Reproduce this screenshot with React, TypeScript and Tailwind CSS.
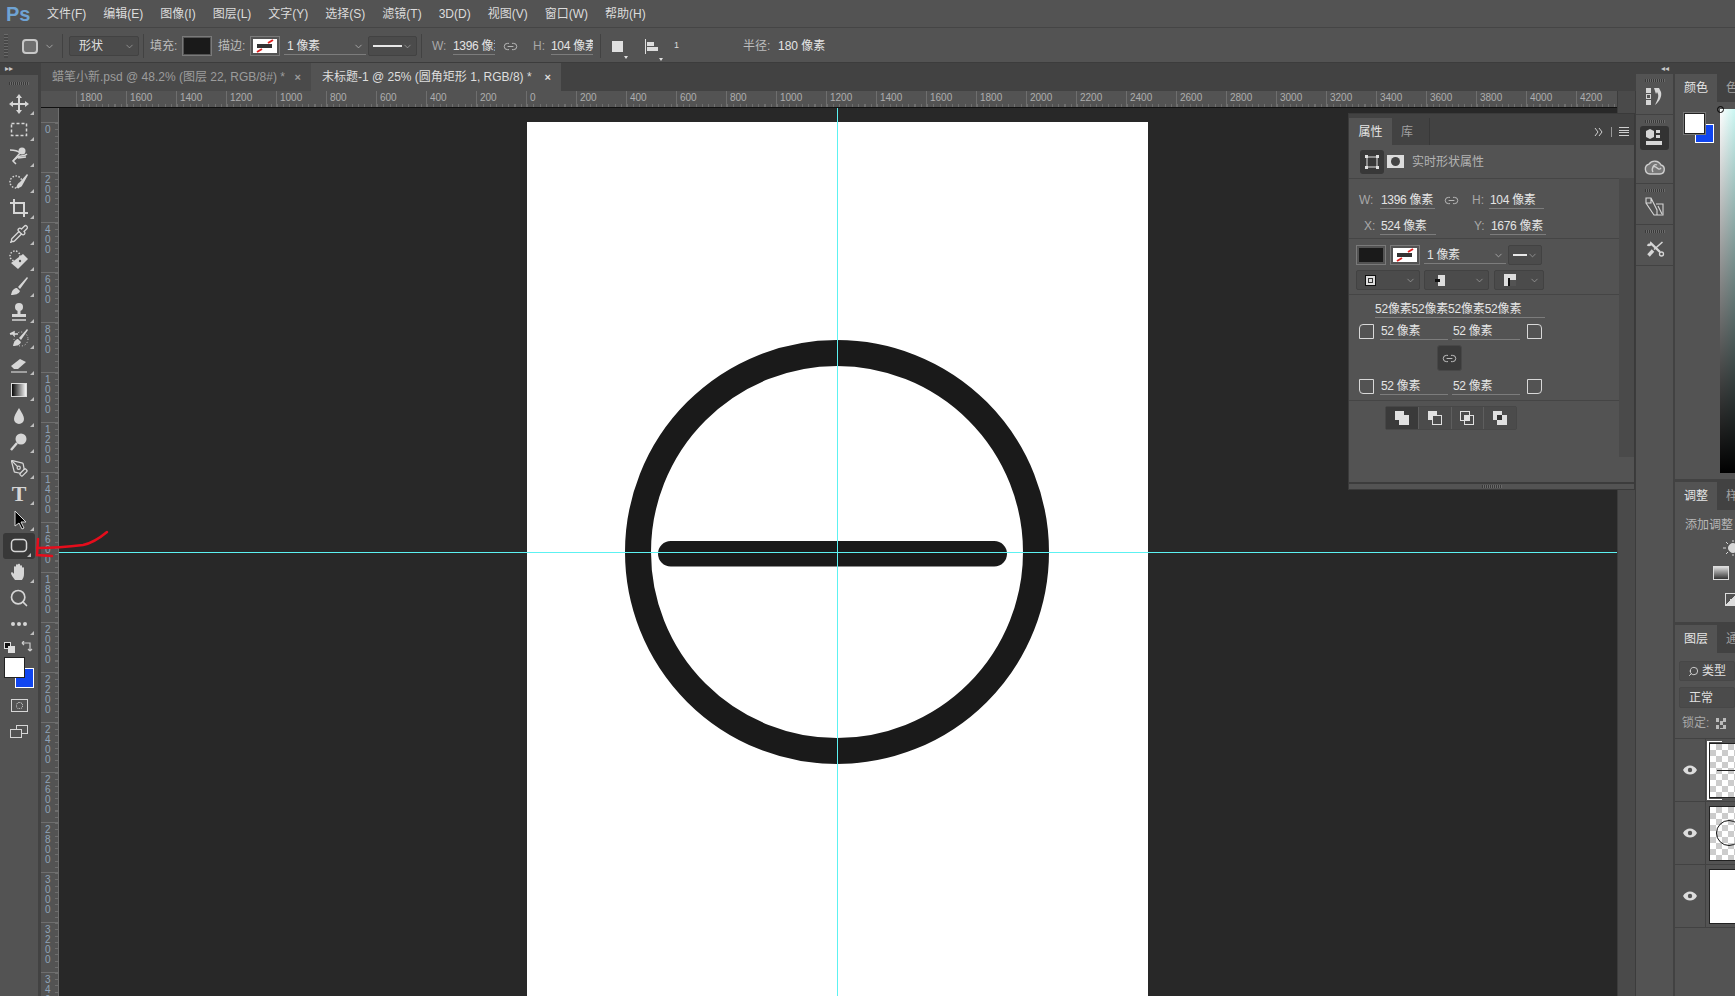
import type { ReactNode } from 'react';
import { ChevronDown, Pipette, PenTool, Search, Link2 } from 'lucide-react';

const font = { fontFamily: '"Liberation Sans", "Noto Sans CJK SC", sans-serif' };

const menus = ['文件(F)', '编辑(E)', '图像(I)', '图层(L)', '文字(Y)', '选择(S)', '滤镜(T)', '3D(D)', '视图(V)', '窗口(W)', '帮助(H)'];

const hLabels = Array.from({ length: 31 }, (_, i) => Math.abs(1800 - i * 200));
const vLabels = Array.from({ length: 18 }, (_, i) => i * 200);

function Svg({ children, size = 20 }: { children: ReactNode; size?: number }) {
  return (
    <svg width={size} height={size} viewBox="0 0 20 20" fill="none" stroke="#d6d6d6" strokeWidth={1.5}>
      {children}
    </svg>
  );
}

const toolIcons: ReactNode[] = [
  // move
  <Svg key="move"><path d="M10 2v16M2 10h16" strokeWidth={2} /><path d="M10 0l3 4H7zM10 20l3-4H7zM0 10l4-3v6zM20 10l-4-3v6z" fill="#d6d6d6" stroke="none" /></Svg>,
  // marquee
  <Svg key="marquee"><rect x="2.5" y="3.5" width="15" height="12" strokeDasharray="3 2" /></Svg>,
  // lasso
  <Svg key="lasso"><path d="M1 4c5 0 8 1 10 3l-7 8 3 3" /><path d="M4 15c3-3 6-5 8-5 3 0 5-1 6-2" /><circle cx="13" cy="5" r="3.5" fill="#d6d6d6" stroke="none" /><path d="M9 12l8-1" /></Svg>,
  // quick selection
  <Svg key="quick"><circle cx="7" cy="10" r="6" strokeDasharray="1.5 1.5" /><path d="M18 2l-7 8c-2 1-3 3-4 6 3 0 6-1 7-4l5-9z" fill="#d6d6d6" stroke="none" /></Svg>,
  // crop
  <Svg key="crop"><path d="M5 1v14h14M1 5h14v14" strokeWidth={2} /></Svg>,
  // eyedropper
  <Pipette key="pipette" size={20} color="#d6d6d6" strokeWidth={1.6} />,
  // healing
  <Svg key="heal"><circle cx="6" cy="6" r="5" strokeDasharray="1.5 1.5" /><path d="M14 4l5 5-10 10-7-6z" fill="#d6d6d6" stroke="none" /><circle cx="11" cy="11" r="1.2" fill="#535353" stroke="none" /></Svg>,
  // brush
  <Svg key="brush"><path d="M18 1L9 11l2 2 8-11zM8 12c-3 0-5 2-6 7 4 0 8-1 9-4z" fill="#d6d6d6" stroke="none" /></Svg>,
  // stamp
  <Svg key="stamp"><circle cx="10" cy="5" r="4" fill="#d6d6d6" stroke="none" /><path d="M8.5 8h3v4h-3zM3 12h14v3H3z" fill="#d6d6d6" stroke="none" /><path d="M3 18h14" /></Svg>,
  // history brush
  <Svg key="history"><path d="M18 1l-8 9 2 2 7-10zM9 11c-2 0-4 2-5 7 4 0 7-1 8-4z" fill="#d6d6d6" stroke="none" /><path d="M1 6h8M1 6l4-2v4" /><circle cx="12" cy="11" r="7" strokeDasharray="1 2" strokeWidth={1} /></Svg>,
  // eraser
  <Svg key="eraser"><path d="M2 12l9-7 6 3-8 7H5z" fill="#d6d6d6" stroke="none" /><path d="M2 18h16" strokeWidth={1.2} /></Svg>,
  // gradient
  <svg key="grad" width="16" height="14" viewBox="0 0 16 14">
    <defs>
      <linearGradient id="tg">
        <stop offset="0" stopColor="#000" />
        <stop offset="1" stopColor="#fff" />
      </linearGradient>
    </defs>
    <rect x="0.5" y="0.5" width="15" height="13" fill="url(#tg)" stroke="#ddd" />
  </svg>,
  // blur
  <Svg key="drop"><path d="M10 2c3 5 5 8 5 11a5 5 0 0 1-10 0c0-3 2-6 5-11z" fill="#d6d6d6" stroke="none" /></Svg>,
  // dodge
  <Svg key="dodge"><circle cx="12" cy="7" r="5.5" fill="#d6d6d6" stroke="none" /><path d="M8 11l-6 7" strokeWidth={2.4} /></Svg>,
  // pen
  <PenTool key="pen" size={19} color="#d6d6d6" strokeWidth={1.6} />,
  // type
  <span key="t" className="text-[22px] leading-none font-bold text-[#d6d6d6]" style={{ fontFamily: '"Liberation Serif", serif' }}>T</span>,
  // path selection
  <Svg key="arrow"><path d="M6 1v15l4-3 3 6 2-1-3-6h5z" fill="#000" stroke="#d6d6d6" strokeWidth={1} /></Svg>,
  // rounded rect
  <Svg key="rrect"><rect x="2.5" y="3.5" width="15" height="12" rx="3.5" /></Svg>,
  // hand
  <Svg key="hand"><path d="M5 18c-2-3-4-5-4-7 0-1 2-1 3 1V5c0-1 2-1 2 0V3c0-1 2-1 2 0v-.5c0-1 2-1 2 0V4c0-1 2-1 2 0v2c0-1 2-1 2 0v6c0 3-1 4-2 6z" fill="#d6d6d6" stroke="none" transform="translate(1 0)" /></Svg>,
  // zoom
  <Search key="zoom" size={20} color="#d6d6d6" strokeWidth={2} />,
  // more
  <Svg key="more"><circle cx="4" cy="10" r="2" fill="#d6d6d6" stroke="none" /><circle cx="10" cy="10" r="2" fill="#d6d6d6" stroke="none" /><circle cx="16" cy="10" r="2" fill="#d6d6d6" stroke="none" /></Svg>,
];

function Grip() {
  return <div className="h-[3px] w-[20px] shrink-0 bg-[repeating-linear-gradient(90deg,#3a3a3a_0_1px,#6a6a6a_1px_2px)]" />;
}

function Dropdown({ className, children }: { className: string; children?: ReactNode }) {
  return (
    <div className={`flex h-[20px] items-center justify-between rounded-[2px] border border-[#424242] bg-[#4b4b4b] pr-[3px] ${className}`}>
      {children}
      <ChevronDown size={11} color="#a8a8a8" strokeWidth={1.5} />
    </div>
  );
}

function StrokeSwatch({ className }: { className: string }) {
  return (
    <div className={`flex h-[20px] w-[30px] items-center justify-center border border-[#7a7a7a] ${className}`}>
      <svg width="24" height="14" viewBox="0 0 24 14">
        <rect width="24" height="14" fill="#fff" />
        <rect x="4" y="5" width="15" height="4" fill="#333" />
        <path d="M15 4l5-3M4 13l5-3" stroke="#e02020" strokeWidth="2" />
      </svg>
    </div>
  );
}

function Field({ className, children }: { className: string; children: ReactNode }) {
  return <div className={`h-[17px] overflow-hidden whitespace-nowrap border-b border-[#7c7c7c] text-[12px] leading-[17px] tracking-[-0.3px] text-[#e4e4e4] ${className}`}>{children}</div>;
}

function Corner({ d }: { d: string }) {
  return (
    <svg width="15" height="15" viewBox="0 0 15 15" fill="none" stroke="#d8d8d8" strokeWidth="1">
      <path d={d} />
    </svg>
  );
}

function TabHead({ label, other }: { label: string; other: string }) {
  return (
    <div className="flex h-[28px] shrink-0 bg-[#424242]">
      <div className="flex w-[42px] shrink-0 items-center justify-center bg-[#535353] text-[12px] text-[#e6e6e6]">{label}</div>
      <div className="flex w-[40px] shrink-0 items-center pl-[9px] text-[12px] text-[#a0a0a0]">{other}</div>
    </div>
  );
}

function LayerRow({ children }: { children: ReactNode }) {
  return (
    <div className="flex h-[63px] shrink-0 border-b border-[#424242]">
      <div className="flex w-[31px] shrink-0 items-center justify-center border-r border-[#424242]">
        <svg width="14" height="10" viewBox="0 0 14 10">
          <path d="M0 5c3-6 11-6 14 0-3 6-11 6-14 0z" fill="#ddd" />
          <circle cx="7" cy="5" r="2.2" fill="#535353" />
        </svg>
      </div>
      <div className="ml-[3px] mt-[4px] h-[55px] flex-1">{children}</div>
    </div>
  );
}

export default function App() {
  return (
    <div className="relative flex h-[996px] w-full flex-col overflow-hidden bg-[#535353] select-none" style={font}>
      {/* Menu bar */}
      <div className="flex h-[28px] shrink-0 items-center border-b border-[#454545]">
        <span className="ml-[6px] w-[41px] text-[20px] font-bold leading-none text-[#6fa3d4]">Ps</span>
        <div className="flex gap-[17px] text-[12px] text-[#dcdcdc]">
          {menus.map((m) => (
            <span key={m}>{m}</span>
          ))}
        </div>
      </div>

      {/* Options bar */}
      <div className="flex h-[35px] shrink-0 items-center border-b border-[#3c3c3c] pt-[2px] text-[12px] text-[#bcbcbc]">
        <div className="ml-[4px] h-[24px] w-[4px] bg-[repeating-linear-gradient(180deg,#6a6a6a_0_1px,#474747_1px_3px)]" />
        <div className="ml-[14px] h-[15px] w-[16px] rounded-[4px] border-2 border-[#c8c8c8] bg-[#6f6f6f]" />
        <ChevronDown className="ml-[6px]" size={11} color="#a8a8a8" />
        <div className="ml-[7px] h-[24px] w-px bg-[#424242]" />
        <Dropdown className="ml-[6px] w-[70px] pl-[9px]"><span className="text-[#e0e0e0]">形状</span></Dropdown>
        <div className="ml-[4px] h-[24px] w-px bg-[#424242]" />
        <span className="ml-[6px] w-[32px]">填充:</span>
        <div className="flex h-[20px] w-[30px] items-center justify-center border border-[#7a7a7a]"><div className="h-[16px] w-[26px] bg-[#1a1a1a]" /></div>
        <span className="ml-[6px] w-[32px]">描边:</span>
        <StrokeSwatch className="" />
        <Field className="ml-[4px] w-[82px] pl-[3px]"><span>1 像素</span></Field>
        <ChevronDown className="-ml-[13px]" size={11} color="#a8a8a8" />
        <Dropdown className="ml-[4px] w-[49px] pl-[4px]"><div className="h-[2px] w-[29px] bg-[#e8e8e8]" /></Dropdown>
        <div className="ml-[4px] h-[24px] w-px bg-[#424242]" />
        <span className="ml-[10px] w-[21px] text-[#a8a8a8]">W:</span>
        <Field className="w-[42px]">1396 像素</Field>
        <Link2 className="ml-[8px]" size={15} color="#bcbcbc" strokeWidth={1.5} />
        <span className="ml-[15px] w-[18px] text-[#a8a8a8]">H:</span>
        <Field className="w-[42px]">104 像素</Field>
        <div className="ml-[7px] h-[24px] w-px bg-[#424242]" />
        <div className="relative ml-[11px] h-[11px] w-[11px] bg-[#e0e0e0]">
          <div className="absolute -bottom-[7px] left-[12px] h-0 w-0 border-x-[2px] border-t-[3px] border-x-transparent border-t-[#e0e0e0]" />
        </div>
        <div className="relative ml-[22px] flex h-[15px] w-[14px] flex-col justify-center gap-[1px] border-l border-[#dcdcdc] pl-[1px]">
          <div className="h-[4px] w-[7px] bg-[#dcdcdc]" />
          <div className="h-[4px] w-[11px] bg-[#dcdcdc]" />
          <div className="absolute -bottom-[7px] left-[13px] h-0 w-0 border-x-[2px] border-t-[3px] border-x-transparent border-t-[#e0e0e0]" />
        </div>
        <span className="ml-[15px] text-[9px] text-[#dcdcdc]">1</span>
        <span className="ml-[64px] w-[35px]">半径:</span>
        <span className="text-[#e4e4e4]">180 像素</span>
      </div>

      {/* Workspace */}
      <div className="flex min-h-0 flex-1">
        {/* Tools */}
        <div className="flex w-[41px] shrink-0 flex-col border-r-[3px] border-[#424242]">
          <div className="flex h-[12px] shrink-0 items-center bg-[#424242] pl-[5px] text-[8px] leading-none text-[#c8c8c8]">▸▸</div>
          <div className="flex h-[16px] shrink-0 items-center justify-center"><Grip /></div>
          {toolIcons.map((icon, i) => (
            <div key={i} className={`relative flex h-[26px] shrink-0 items-center justify-center ${i === 17 ? 'mx-[3px] rounded-[3px] bg-[#383838]' : ''}`}>
              {icon}
              {i !== 19 && <div className="absolute bottom-[2px] right-[4px] h-0 w-0 border-b-[4px] border-l-[4px] border-b-[#bdbdbd] border-l-transparent" />}
            </div>
          ))}
          <div className="relative h-[24px] shrink-0">
            <div className="absolute left-[4px] top-[5px] h-[7px] w-[7px] border border-[#ddd] bg-[#111]" />
            <div className="absolute left-[8px] top-[9px] h-[7px] w-[7px] bg-[#ddd]" />
            <svg className="absolute left-[21px] top-[4px]" width="12" height="12" viewBox="0 0 12 12" fill="none" stroke="#ccc" strokeWidth="1.2">
              <path d="M1 2h8v8M1 2l2-2M1 2l2 2M9 10l-2-2M9 10l2-2" />
            </svg>
          </div>
          <div className="relative h-[32px] shrink-0">
            <div className="absolute left-[15px] top-[7px] h-[20px] w-[19px] border border-white bg-[#1045f0]" />
            <div className="absolute left-[4px] top-[-4px] h-[21px] w-[21px] border border-[#222] bg-white" />
          </div>
          <div className="mt-[3px] flex h-[18px] shrink-0 items-center justify-center">
            <div className="flex h-[13px] w-[17px] items-center justify-center border border-[#d6d6d6]"><div className="h-[7px] w-[7px] rounded-full border border-dotted border-[#d6d6d6]" /></div>
          </div>
          <div className="relative mt-[9px] flex h-[18px] shrink-0 items-center justify-center">
            <svg width="18" height="14" viewBox="0 0 18 14" fill="#535353" stroke="#d6d6d6">
              <rect x="6.5" y="0.5" width="11" height="8" />
              <rect x="0.5" y="4.5" width="11" height="8" />
            </svg>
          </div>
        </div>

        {/* Documents */}
        <div className="flex min-w-0 flex-1 flex-col">
          <div className="flex h-[28px] shrink-0 bg-[#424242] text-[12px]">
            <div className="flex w-[270px] items-center justify-between bg-[#4a4a4a] pl-[11px] pr-[10px] text-[#9c9c9c]">
              <span>蜡笔小新.psd @ 48.2% (图层 22, RGB/8#) *</span>
              <span className="text-[11px] font-bold">×</span>
            </div>
            <div className="flex w-[250px] items-center justify-between bg-[#535353] pl-[11px] pr-[10px] text-[#dedede]">
              <span>未标题-1 @ 25% (圆角矩形 1, RGB/8) *</span>
              <span className="text-[11px] font-bold">×</span>
            </div>
          </div>

          <div className="flex min-h-0 flex-1">
            <div className="flex min-w-0 flex-1 flex-col">
              {/* Horizontal ruler */}
              <div className="flex h-[17px] shrink-0 overflow-hidden border-b border-[#111] text-[10px] leading-[13px] text-[#aeaeae]">
                <div className="w-[36px] shrink-0 border-r border-[#6e6e6e]" />
                {hLabels.map((v, i) => (
                  <div key={i} className="relative w-[50px] shrink-0 border-r border-[#6e6e6e] pl-[3px] bg-[repeating-linear-gradient(90deg,#6e6e6e_0_1px,transparent_1px_6.25px)] bg-[length:100%_3px] bg-bottom bg-no-repeat">
                    {v}
                  </div>
                ))}
              </div>

              <div className="flex min-h-0 flex-1">
                {/* Vertical ruler */}
                <div className="flex w-[18px] shrink-0 flex-col overflow-hidden border-r border-[#6e6e6e] text-[10px] leading-[10px] text-[#8fa3b8]">
                  <div className="h-[14px] shrink-0" />
                  {vLabels.map((v) => (
                    <div key={v} className="flex h-[50px] shrink-0 flex-col border-t border-[#6e6e6e] bg-[repeating-linear-gradient(180deg,#6e6e6e_0_1px,transparent_1px_6.25px)] bg-[length:3px_100%] bg-right bg-no-repeat pl-[4px] pt-[2px]">
                      {String(v).split('').map((c, i) => (
                        <span key={i}>{c}</span>
                      ))}
                    </div>
                  ))}
                </div>

                {/* Canvas */}
                <div className="relative min-w-0 flex-1 overflow-hidden bg-[#282828]">
                  <div className="absolute bottom-0 left-[468px] top-[14px] w-[621px] bg-white">
                    <svg className="absolute left-[98px] top-[218px]" width="424" height="424" viewBox="0 0 424 424">
                      <circle cx="212" cy="212" r="199" fill="none" stroke="#1a1a1a" strokeWidth="26" />
                      <rect x="33" y="201" width="349" height="25.5" rx="12.75" fill="#1a1a1a" />
                    </svg>
                  </div>
                  <div className="absolute bottom-0 left-[778px] top-0 w-px bg-[#5cf2f2]" />
                  <div className="absolute left-0 right-0 top-[444px] h-px bg-[#5cf2f2]" />
                </div>
              </div>
            </div>

            {/* Document scrollbar */}
            <div className="w-[19px] shrink-0 border-x border-[#3c3c3c] bg-[#4a4a4a]" />
          </div>
        </div>

        {/* Icon dock */}
        <div className="flex w-[39px] shrink-0 flex-col border-r-[2px] border-[#424242]">
          <div className="flex h-[11px] shrink-0 items-center justify-end bg-[#424242] pr-[4px] text-[8px] leading-none text-[#c8c8c8]">◂◂</div>
          <div className="flex h-[41px] shrink-0 flex-col items-center gap-[5px] border-b border-[#424242] pt-[5px]">
            <Grip />
            <svg width="18" height="20" viewBox="0 0 18 20" fill="#d6d6d6">
              <rect x="0" y="1" width="5" height="5" />
              <rect x="0.5" y="7.5" width="4" height="4" fill="none" stroke="#d6d6d6" />
              <rect x="0" y="13" width="5" height="5" />
              <path d="M8 1h5l2 4c1 4-1 9-6 13 2-4 4-8 3-11l-1-2-1 2z" />
            </svg>
          </div>
          <div className="flex h-[69px] shrink-0 flex-col items-center gap-[3px] border-b border-[#424242] pt-[5px]">
            <Grip />
            <div className="flex h-[24px] w-[29px] shrink-0 items-center justify-center rounded-[3px] bg-[#333]">
              <svg width="20" height="18" viewBox="0 0 20 18" fill="#d6d6d6">
                <path d="M1 2l4-2 4 2v6l-4 2-4-2z" />
                <rect x="11" y="1" width="4" height="3" />
                <rect x="11" y="6" width="4" height="3" />
                <rect x="1" y="12" width="16" height="4" />
              </svg>
            </div>
            <svg className="mt-[6px] shrink-0" width="22" height="16" viewBox="0 0 22 16" fill="#777" stroke="#cfcfcf" strokeWidth="1.4">
              <path d="M6 15a5 5 0 0 1-1-9.8A7 7 0 0 1 17 6a4.6 4.6 0 0 1-1 9z" />
              <path d="M9 8c3-3 5 5 8 1M13 6c-3-2-6 4-4 7" fill="none" />
            </svg>
          </div>
          <div className="flex h-[41px] shrink-0 flex-col items-center gap-[5px] border-b border-[#424242] pt-[5px]">
            <Grip />
            <svg width="20" height="20" viewBox="0 0 20 20" fill="none" stroke="#d6d6d6" strokeWidth="1.1">
              <path d="M1 1h5l6 12v5H9L1 6zM1 6h5V1M11 7h7v11h-6" />
              <path d="M13 9l4 8" />
            </svg>
          </div>
          <div className="flex h-[41px] shrink-0 flex-col items-center gap-[7px] border-b border-[#424242] pt-[5px]">
            <Grip />
            <svg width="20" height="18" viewBox="0 0 20 18" fill="#d6d6d6" stroke="#d6d6d6" strokeWidth="2.4">
              <path d="M2.5 4.5c1.5 1 3 .5 3.5-1L15 12" fill="none" />
              <path d="M17.5 2L9 9.5" fill="none" strokeWidth="1.6" />
              <path d="M8 10.5l-4.5 5" fill="none" strokeWidth="3.4" />
              <circle cx="16.5" cy="14" r="2" fill="none" strokeWidth="1.3" />
            </svg>
          </div>
        </div>

        {/* Right panels, cut off by the window edge */}
        <div className="flex w-[60px] shrink-0 flex-col overflow-hidden">
          <div className="h-[11px] shrink-0 bg-[#424242]" />
          <div className="flex h-[408px] shrink-0 flex-col border-b-[3px] border-[#424242]">
            <TabHead label="颜色" other="色" />
            <div className="relative min-h-0 flex-1">
              <div className="absolute left-[20px] top-[22px] h-[19px] w-[19px] border border-white bg-[#1045f0]" />
              <div className="absolute left-[9px] top-[11px] h-[21px] w-[21px] border border-[#222] bg-white outline outline-[#777]" />
              <div className="absolute bottom-[6px] left-[45px] top-[7px] w-[20px] bg-[linear-gradient(180deg,transparent,#000),linear-gradient(90deg,#fff,#b8f4ee)]">
                <div className="absolute -left-[3px] -top-[3px] h-[7px] w-[7px] rounded-full border border-black" />
              </div>
            </div>
          </div>
          <div className="flex h-[143px] shrink-0 flex-col border-b-[3px] border-[#424242]">
            <TabHead label="调整" other="样" />
            <span className="ml-[10px] mt-[6px] whitespace-nowrap text-[12px] text-[#b8b8b8]">添加调整</span>
            <svg className="ml-[48px] mt-[6px] shrink-0" width="14" height="16" viewBox="0 0 14 16" fill="#d6d6d6" stroke="#d6d6d6">
              <circle cx="10" cy="8" r="4.5" />
              <path d="M0 8h3M10 0v2M10 14v2M3 2l2 2M3 14l2-2" fill="none" />
            </svg>
            <div className="ml-[38px] mt-[10px] h-[14px] w-[16px] shrink-0 border border-[#ddd] bg-[linear-gradient(180deg,#ddd,#333)]" />
            <div className="ml-[50px] mt-[13px] h-[13px] w-[11px] shrink-0 border border-[#ddd] bg-[linear-gradient(135deg,transparent_50%,#ddd_50%)]" />
          </div>
          <div className="flex min-h-0 flex-1 flex-col">
            <TabHead label="图层" other="通" />
            <div className="ml-[4px] mt-[8px] flex h-[20px] shrink-0 items-center whitespace-nowrap rounded-[2px] border border-[#474747] bg-[#4b4b4b] pl-[8px] text-[12px] text-[#e0e0e0]">
              <Search className="-scale-x-100" size={11} color="#d6d6d6" />
              <span className="ml-[3px]">类型</span>
            </div>
            <div className="ml-[4px] mt-[6px] flex h-[21px] shrink-0 items-center rounded-[2px] border border-[#474747] bg-[#4b4b4b] pl-[9px] text-[12px] text-[#e0e0e0]">正常</div>
            <div className="flex h-[31px] shrink-0 items-center whitespace-nowrap border-b border-[#424242] pl-[7px] text-[12px] text-[#a8a8a8]">
              <span>锁定:</span>
              <div className="ml-[7px] h-[11px] w-[11px] bg-[repeating-conic-gradient(#555_0_25%,#bbb_0_50%)] bg-[length:7px_7px]" />
            </div>
            <LayerRow>
              <div className="relative h-full w-[40px] border border-[#222] bg-[repeating-conic-gradient(#ccc_0_25%,#fff_0_50%)] bg-[length:12px_12px]">
                <div className="absolute left-[7px] top-[26px] h-px w-[32px] bg-[#222]" />
                <div className="absolute -left-[3px] -top-[3px] h-[59px] w-[15px] border-y border-l-2 border-white" />
              </div>
            </LayerRow>
            <LayerRow>
              <div className="relative h-full w-[40px] overflow-hidden border border-[#222] bg-[repeating-conic-gradient(#ccc_0_25%,#fff_0_50%)] bg-[length:12px_12px]">
                <div className="absolute left-[6px] top-[13px] h-[26px] w-[26px] rounded-full border border-[#111]" />
              </div>
            </LayerRow>
            <LayerRow>
              <div className="h-full w-[40px] border border-[#222] bg-white" />
            </LayerRow>
          </div>
        </div>
      </div>

      {/* Properties panel */}
      <div className="absolute left-[1348px] top-[113px] flex h-[377px] w-[287px] flex-col border border-[#3a3a3a] bg-[#535353] text-[12px] text-[#b4b4b4]">
        <div className="flex h-[31px] shrink-0 items-end bg-[#424242]">
          <div className="flex h-[27px] w-[43px] items-center justify-center bg-[#535353] text-[#e6e6e6]">属性</div>
          <div className="flex h-[27px] w-[38px] items-center border-r border-[#383838] pl-[9px] text-[#a0a0a0]">库</div>
          <div className="flex h-[27px] flex-1 items-center justify-end pr-[5px]">
            <svg width="9" height="8" viewBox="0 0 9 8" fill="none" stroke="#d0d0d0">
              <path d="M1 0l3 4-3 4M5 0l3 4-3 4" />
            </svg>
            <div className="ml-[8px] h-[10px] w-px bg-[#9a9a9a]" />
            <div className="ml-[7px] flex h-[9px] w-[10px] flex-col justify-between">
              <div className="h-px bg-[#d0d0d0]" />
              <div className="h-px bg-[#d0d0d0]" />
              <div className="h-px bg-[#d0d0d0]" />
              <div className="h-px bg-[#d0d0d0]" />
            </div>
          </div>
        </div>

        <div className="flex min-h-0 flex-1">
          <div className="flex min-w-0 flex-1 flex-col">
            <div className="flex h-[34px] shrink-0 items-center border-b border-[#454545] pl-[11px]">
              <div className="flex h-[24px] w-[24px] items-center justify-center rounded-[3px] bg-[#383838]">
                <svg width="14" height="14" viewBox="0 0 14 14" fill="#e0e0e0" stroke="#e0e0e0">
                  <rect x="2" y="2" width="10" height="10" fill="none" />
                  <rect x="0.5" y="0.5" width="2" height="2" />
                  <rect x="11.5" y="0.5" width="2" height="2" />
                  <rect x="0.5" y="11.5" width="2" height="2" />
                  <rect x="11.5" y="11.5" width="2" height="2" />
                </svg>
              </div>
              <div className="ml-[3px] flex h-[13px] w-[17px] items-center justify-center bg-[#dcdcdc]"><div className="h-[9px] w-[9px] rounded-full bg-[#444]" /></div>
              <span className="ml-[8px] pt-[1px]">实时形状属性</span>
            </div>

            <div className="flex h-[60px] shrink-0 flex-col gap-[8px] border-b border-[#454545] pt-[12px]">
              <div className="flex items-center">
                <span className="ml-[10px] w-[21px] text-[#a8a8a8]">W:</span>
                <Field className="w-[55px] pl-[1px]">1396 像素</Field>
                <Link2 className="ml-[9px]" size={15} color="#bcbcbc" strokeWidth={1.5} />
                <span className="ml-[13px] w-[17px] text-[#a8a8a8]">H:</span>
                <Field className="w-[55px] pl-[1px]">104 像素</Field>
              </div>
              <div className="flex items-center">
                <span className="ml-[15px] w-[16px] text-[#a8a8a8]">X:</span>
                <Field className="w-[56px] pl-[1px]">524 像素</Field>
                <span className="ml-[38px] w-[16px] text-[#a8a8a8]">Y:</span>
                <Field className="w-[56px] pl-[1px]">1676 像素</Field>
              </div>
            </div>

            <div className="flex h-[56px] shrink-0 flex-col gap-[5px] border-b border-[#454545] pl-[7px] pt-[6px]">
              <div className="flex items-center">
                <div className="flex h-[20px] w-[30px] items-center justify-center border border-[#7a7a7a]"><div className="h-[14px] w-[24px] bg-[#1a1a1a]" /></div>
                <StrokeSwatch className="ml-[4px]" />
                <Field className="ml-[4px] w-[82px] pl-[3px]">1 像素</Field>
                <ChevronDown className="-ml-[13px]" size={11} color="#a8a8a8" />
                <Dropdown className="ml-[4px] w-[34px] pl-[4px]"><div className="h-[2px] w-[14px] bg-[#e8e8e8]" /></Dropdown>
              </div>
              <div className="flex items-center gap-[4px]">
                <Dropdown className="w-[64px] pl-[8px]">
                  <div className="flex h-[11px] w-[11px] items-center justify-center border border-[#111] bg-[#ddd]"><div className="h-[5px] w-[5px] border border-[#333]" /></div>
                </Dropdown>
                <Dropdown className="w-[65px] pl-[10px]">
                  <div className="relative h-[11px] w-[10px]"><div className="absolute right-0 h-full w-[7px] bg-[#ddd]" /><div className="absolute left-0 top-[4px] h-[3px] w-[5px] bg-[#111]" /></div>
                </Dropdown>
                <Dropdown className="ml-[1px] w-[50px] pl-[9px]">
                  <div className="relative h-[12px] w-[12px] bg-[#ddd]"><div className="absolute right-0 top-[6px] h-[6px] w-[6px] bg-[#535353]" /><div className="absolute left-[4px] top-[4px] h-[8px] w-[2px] bg-[#111]" /></div>
                </Dropdown>
              </div>
            </div>

            <div className="flex h-[106px] shrink-0 flex-col border-b border-[#454545]">
              <div className="ml-[26px] mt-[6px] h-[17px] w-[170px] border-b border-[#7c7c7c] leading-[16px] tracking-[-0.2px] text-[#e4e4e4]">52像素52像素52像素52像素</div>
              <div className="mt-[5px] flex items-center">
                <div className="ml-[10px] w-[21px]"><Corner d="M0.5 14.5V4a3.5 3.5 0 0 1 3.5-3.5h10.5v14z" /></div>
                <Field className="w-[68px] pl-[1px]">52 像素</Field>
                <Field className="ml-[4px] w-[68px] pl-[1px]">52 像素</Field>
                <div className="ml-[7px]"><Corner d="M0.5 14.5V.5H11a3.5 3.5 0 0 1 3.5 3.5v10.5z" /></div>
              </div>
              <div className="ml-[88px] mt-[5px] flex h-[26px] w-[25px] items-center justify-center rounded-[3px] border border-[#474747] bg-[#3a3a3a]">
                <Link2 size={15} color="#c4c4c4" strokeWidth={1.5} />
              </div>
              <div className="mt-[7px] flex items-center">
                <div className="ml-[10px] w-[21px]"><Corner d="M.5.5v10.5a3.5 3.5 0 0 0 3.5 3.5h10.5V.5z" /></div>
                <Field className="w-[68px] pl-[1px]">52 像素</Field>
                <Field className="ml-[4px] w-[68px] pl-[1px]">52 像素</Field>
                <div className="ml-[7px]"><Corner d="M.5.5h14V11a3.5 3.5 0 0 1-3.5 3.5H.5z" /></div>
              </div>
            </div>

            <div className="ml-[36px] mt-[5px] flex h-[24px] w-[132px] rounded-[2px] border border-[#474747]">
              <div className="flex flex-1 items-center justify-center border-r border-[#5e5e5e] bg-[#3a3a3a]">
                <svg width="14" height="14" viewBox="0 0 14 14" fill="#e0e0e0"><rect width="9" height="9" /><rect x="4" y="4" width="10" height="10" /></svg>
              </div>
              <div className="flex flex-1 items-center justify-center border-r border-[#5e5e5e] bg-[#4b4b4b]">
                <svg width="14" height="14" viewBox="0 0 14 14"><rect width="9" height="9" fill="#e0e0e0" /><rect x="4.5" y="4.5" width="9" height="9" fill="#4b4b4b" stroke="#e0e0e0" /></svg>
              </div>
              <div className="flex flex-1 items-center justify-center border-r border-[#5e5e5e] bg-[#4b4b4b]">
                <svg width="14" height="14" viewBox="0 0 14 14" fill="none" stroke="#e0e0e0"><rect x=".5" y=".5" width="9" height="9" /><rect x="4.5" y="4.5" width="9" height="9" /><rect x="4" y="4" width="6" height="6" fill="#e0e0e0" stroke="none" /></svg>
              </div>
              <div className="flex flex-1 items-center justify-center bg-[#4b4b4b]">
                <svg width="14" height="14" viewBox="0 0 14 14" fill="#e0e0e0"><rect width="9" height="9" /><rect x="4" y="4" width="10" height="10" /><rect x="4" y="4" width="5" height="5" fill="#333" /></svg>
              </div>
            </div>
          </div>
          <div className="mt-[33px] h-[279px] w-[15px] shrink-0 bg-[#4a4a4a]" />
        </div>

        <div className="flex h-[7px] shrink-0 items-center justify-center border-t-2 border-[#3c3c3c]">
          <Grip />
        </div>
      </div>

      {/* Red pen annotation */}
      <svg className="pointer-events-none absolute left-0 top-0" width="120" height="570" viewBox="0 0 120 570" fill="none" stroke="#e50d1c" strokeWidth="2.5" strokeLinecap="round">
        <path d="M107 532c-6 5-14 11-24 13-16 2-30 3-46 3" />
        <path d="M38 539l-1 16 15 1" />
      </svg>
    </div>
  );
}
